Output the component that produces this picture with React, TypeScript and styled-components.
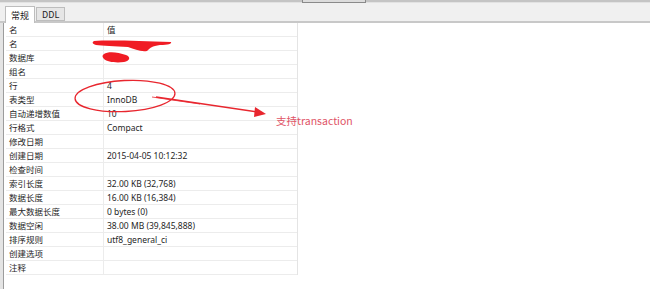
import styled, { createGlobalStyle } from "styled-components"

const GlobalStyle = createGlobalStyle`
  html, body {
    margin: 0;
    padding: 0;
    background: #ffffff;
  }
  body {
    font-family: "Noto Sans", "Noto Sans CJK SC", sans-serif;
  }
`

const rows: [string, string][] = [
  ["名", "值"],
  ["名", ""],
  ["数据库", ""],
  ["组名", ""],
  ["行", "4"],
  ["表类型", "InnoDB"],
  ["自动递增数值", "10"],
  ["行格式", "Compact"],
  ["修改日期", ""],
  ["创建日期", "2015-04-05 10:12:32"],
  ["检查时间", ""],
  ["索引长度", "32.00 KB (32,768)"],
  ["数据长度", "16.00 KB (16,384)"],
  ["最大数据长度", "0 bytes (0)"],
  ["数据空闲", "38.00 MB (39,845,888)"],
  ["排序规则", "utf8_general_ci"],
  ["创建选项", ""],
  ["注释", ""],
]

const Window = styled.div`
  position: relative;
  width: 650px;
  height: 289px;
  overflow: hidden;
  background: #fff;
  display: flex;
  flex-direction: column;
`

const TopBar = styled.div`
  height: 2px;
  background: #c4c4c4;
  position: relative;
`

const ScrollThumb = styled.div`
  position: absolute;
  left: 302px;
  top: 0;
  width: 64px;
  height: 3px;
  border: 1px solid #8a8a8a;
  border-top: none;
  box-sizing: border-box;
  background: #dcdcdc;
`

const TabStrip = styled.div`
  height: 18px;
  background: #f0f0f0;
  border-top: 1px solid #e2e2e2;
  border-bottom: 2px solid #c8c8c8;
  display: flex;
  align-items: flex-end;
  padding-left: 5px;
  gap: 1px;
`

const Tab = styled.div<{ $active?: boolean }>`
  height: ${(p) => (p.$active ? 17 : 14)}px;
  margin-bottom: ${(p) => (p.$active ? -2 : 0)}px;
  padding: 0 ${(p) => (p.$active ? 5 : 5)}px;
  box-sizing: border-box;
  border: 1px solid #bdbdbd;
  border-bottom: ${(p) => (p.$active ? "none" : "1px solid #bdbdbd")};
  background: ${(p) => (p.$active ? "#ffffff" : "#e6e6e6")};
  font-size: 9px;
  color: #222;
  display: flex;
  align-items: center;
  font-family: "Noto Sans CJK SC", "Noto Sans", sans-serif;
`

const Body = styled.div`
  flex: 1;
  display: flex;
`

const Gutter = styled.div`
  width: 3px;
  background: #e4e4e4;
  border-right: 1px solid #9c9c9c;
`

const TableWrap = styled.div`
  padding: 0 0 0 2px;
`

const Table = styled.div`
  display: grid;
  grid-template-columns: 98px 193px;
  border-right: 1px solid #e4e4e4;
`

const Cell = styled.div<{ $first?: boolean }>`
  height: 14px;
  box-sizing: border-box;
  border-bottom: 1px solid #ececec;
  border-right: ${(p) => (p.$first ? "1px solid #ececec" : "none")};
  padding-left: 3px;
  font-size: 8.5px;
  line-height: 13px;
  color: #262626;
  white-space: nowrap;
  font-family: "Noto Sans", "Noto Sans CJK SC", sans-serif;
`

const Overlay = styled.svg`
  position: absolute;
  left: 0;
  top: 0;
  pointer-events: none;
`

const Note = styled.div`
  position: absolute;
  left: 276px;
  top: 113px;
  font-size: 10.5px;
  color: #e05466;
  font-family: "Noto Sans CJK SC", "Noto Sans", sans-serif;
  white-space: nowrap;
`

export default function App() {
  return (
    <>
      <GlobalStyle />
      <Window>
        <TopBar>
          <ScrollThumb />
        </TopBar>
        <TabStrip>
          <Tab $active>常规</Tab>
          <Tab>DDL</Tab>
        </TabStrip>
        <Body>
          <Gutter />
          <TableWrap>
            <Table>
              {rows.map(([k, v], i) => (
                <>
                  <Cell key={"k" + i} $first>{k}</Cell>
                  <Cell key={"v" + i}>{v}</Cell>
                </>
              ))}
            </Table>
          </TableWrap>
        </Body>
        <Overlay width="650" height="289" viewBox="0 0 650 289">
          {/* redaction scribbles */}
          <path
            d="M94 41 C 110 40, 140 41, 171 42 C 172 44, 168 45, 160 45 C 152 46, 150 48, 147 51 C 140 52, 135 49, 128 47 C 115 46, 102 46, 96 45 C 92 44, 92 42, 94 41 Z"
            fill="#f01c24"
          />
          <path
            d="M104 54 C 108 51, 118 52, 126 55 C 131 57, 130 61, 124 62 C 116 63, 107 62, 104 59 C 102 57, 102 55, 104 54 Z"
            fill="#f01c24"
          />
          {/* ellipse */}
          <ellipse cx="125" cy="96" rx="50" ry="15.5" transform="rotate(-3 125 96)" fill="none" stroke="#e8262e" strokeWidth="1.3" />
          {/* arrow */}
          <path d="M156 97 L 258 112" stroke="#e8262e" strokeWidth="1.6" fill="none" />
          <path d="M152 97 L 200 104" stroke="#e8262e" strokeWidth="0.8" fill="none" />
          <polygon points="266,114 255,107 254,117" fill="#e8262e" />
        </Overlay>
        <Note>支持transaction</Note>
      </Window>
    </>
  )
}
